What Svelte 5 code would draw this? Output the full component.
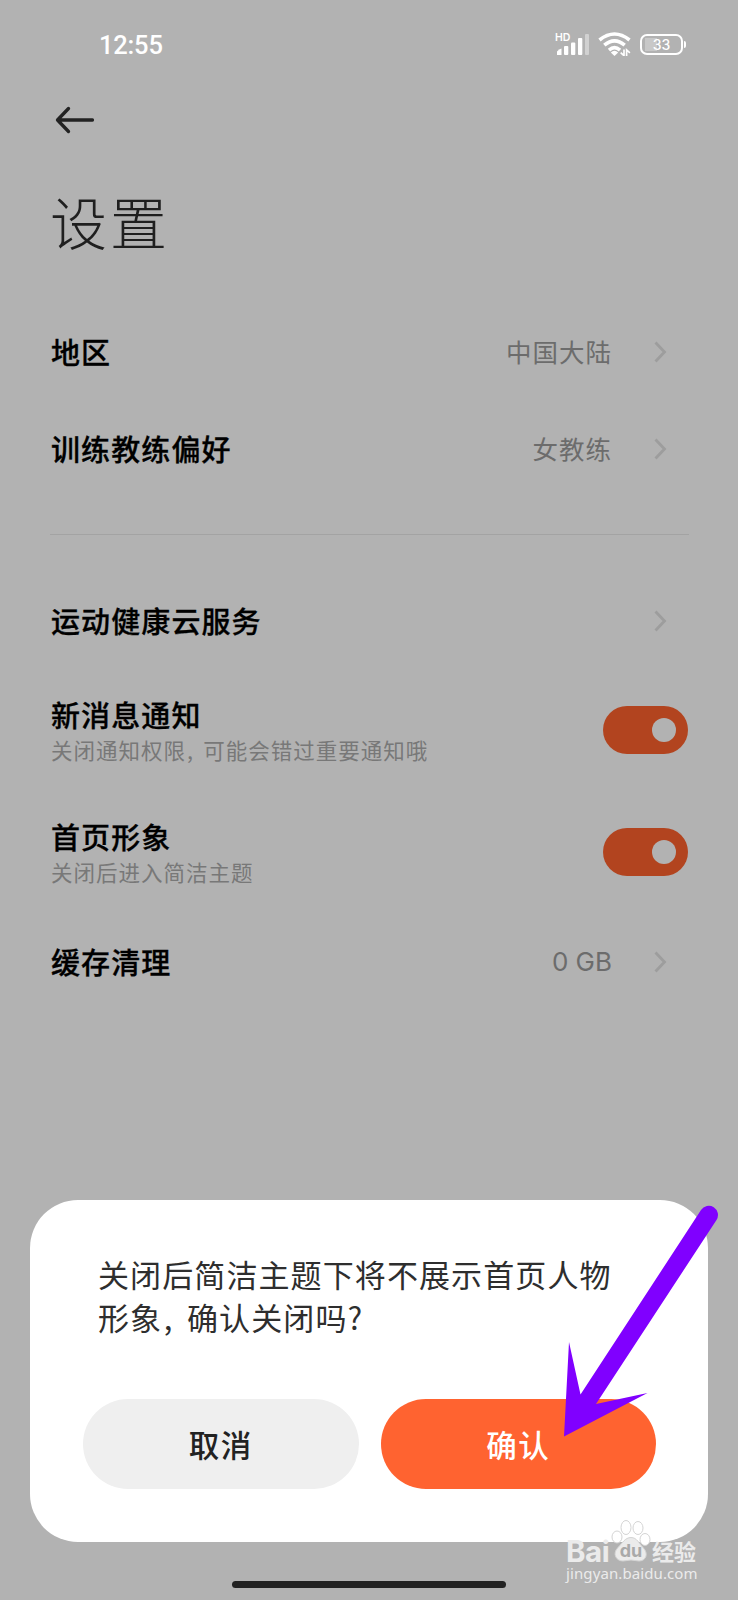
<script>
    let groups = [
        [
            { title: '地区', value: '中国大陆' },
            { title: '训练教练偏好', value: '女教练' }
        ],
        [
            { title: '运动健康云服务' },
            { title: '新消息通知', desc: ['关闭通知权限', '可能会错过重要通知哦'], toggle: true },
            { title: '首页形象', desc: ['关闭后进入简洁主题'], toggle: true },
            { title: '缓存清理', value: '0 GB', latin: true }
        ]
    ];
</script>

<div class="phone">
    <header class="status">
        <span class="time">12:55</span>
        <div class="status-icons">
            <svg class="signal" width="34" height="24" viewBox="0 0 34 24">
                <text x="0" y="9.300" font-size="10.5" font-weight="600" fill="#fff">HD</text>
                <g fill="#fff">
                    <path d="M2 23v-3.500q2-2.500 4.500-3v6.500z" />
                    <rect x="9" y="14" width="4.300" height="9" rx="1" />
                    <rect x="16" y="10.500" width="4.300" height="12.500" rx="1" />
                    <rect x="23" y="6" width="4.300" height="17" rx="1" />
                    <rect x="30" y="2" width="4" height="21" rx="1" opacity=".4" />
                </g>
            </svg>
            <svg class="wifi" width="33" height="24" viewBox="0 0 33 24">
                <g fill="none" stroke="#fff" stroke-width="3.600">
                    <path d="M1.500 8Q16.500-4 31.500 8" />
                    <path d="M6.300 13.200Q16.500 4.500 26.700 13.200" />
                    <path d="M11 18.100Q16.500 13.300 22 18.100" />
                </g>
                <path d="M12.800 20.500q3.700-3.500 7.400 0l-3.700 3.500z" fill="#fff" />
                <path d="M26 17.500v6.200l-3.300-3M28.600 24v-6.200l3.300 3" fill="none" stroke="#fff" stroke-width="1.700" />
            </svg>
            <div class="battery"><span>33</span></div>
        </div>
    </header>

    <nav>
        <svg width="40" height="30" viewBox="0 0 40 30" fill="none" stroke="#222" stroke-width="3.300" stroke-linecap="round" stroke-linejoin="round">
            <path d="M37.500 15H2.500M13.500 3.500L2.500 15l11 11.500" />
        </svg>
    </nav>

    <h1>设置</h1>

    <main>
        {#each groups as group}
            <section>
                {#each group as item}
                    <div class="row" class:tall={item.toggle}>
                        <div class="label">
                            <h2>{item.title}</h2>
                            {#if item.desc}
                                <p>{#each item.desc as part, i}{#if i > 0}<span class="comma">,</span>{/if}{part}{/each}</p>
                            {/if}
                        </div>
                        {#if item.toggle}
                            <div class="toggle"><i></i></div>
                        {:else}
                            {#if item.value}
                                <span class="value" class:latin={item.latin}>{item.value}</span>
                            {/if}
                            <svg class="chevron" width="14" height="22" viewBox="0 0 14 22" fill="none" stroke="#9d9d9d" stroke-width="2.800">
                                <path d="M2.500 1.500L11.500 11l-9 9.500" />
                            </svg>
                        {/if}
                    </div>
                {/each}
            </section>
        {/each}
    </main>

    <div class="dialog">
        <p>关闭后简洁主题下将不展示首页人物<br />形象<span class="comma">,</span>确认关闭吗?</p>
        <div class="actions">
            <button class="cancel">取消</button>
            <button class="confirm">确认</button>
        </div>
    </div>

    <div class="home-bar"></div>

    <!-- pointer towards the confirm button -->
    <svg class="pointer" width="160" height="240" viewBox="0 0 160 240">
        <path d="M4 236.500L9 142l11.500 52.500L141 10A8.900 8.900 0 0 1 156.500 20L36 204l51.500-11z" fill="#8000ff" />
    </svg>

    <div class="watermark">
        <div class="brand">
            <span class="bai">Bai</span>
            <svg width="40" height="44" viewBox="0 0 40 44">
                <g fill="#fff" stroke="#d4d4d4" stroke-width="1">
                    <ellipse cx="6" cy="18" rx="5" ry="6" />
                    <ellipse cx="15" cy="8.500" rx="5" ry="7" />
                    <ellipse cx="27" cy="9" rx="5" ry="6.500" />
                    <ellipse cx="34" cy="20.500" rx="5" ry="6" />
                    <path d="M20 18.500c6 0 8 6 12 10 6 6 3 13.500-4 13.500-3 0-5-1-8-1s-5 1-8 1c-7 0-11-7.500-5-13.500 4-4 7-10 13-10z" fill="#ebebeb" />
                </g>
                <text x="20" y="38" text-anchor="middle" font-size="18" font-weight="700" fill="#a9a9a9">du</text>
            </svg>
            <span class="jy">经验</span>
        </div>
        <div class="url">jingyan.baidu.com</div>
    </div>
</div>

<style>
    :global(body) {
        margin: 0;
    }

    .phone {
        position: relative;
        width: 738px;
        height: 1600px;
        overflow: hidden;
        background: #b2b2b2;
        font-family: "Noto Sans CJK SC", sans-serif;
    }

    .status {
        display: flex;
        justify-content: space-between;
        align-items: center;
        height: 88px;
        padding: 0 51px 0 99px;
        box-sizing: border-box;
        color: #fff;
    }

    .time {
        padding-top: 1px;
        font: 500 25.5px/30px Roboto, sans-serif;
        letter-spacing: -0.2px;
    }

    .status-icons {
        display: flex;
        align-items: center;
        gap: 9px;
    }

    .signal text {
        font-family: Inter, sans-serif;
    }

    .battery {
        position: relative;
        width: 43px;
        height: 21px;
        margin-right: 4px;
        box-sizing: border-box;
        border: 2px solid #fff;
        border-radius: 7px;
        background: linear-gradient(#c8c8c8, #c8c8c8) 3px 2px / 12px 13px no-repeat;
        font: 500 14px/17px Inter, sans-serif;
        text-align: center;
    }

    .battery::after {
        content: '';
        position: absolute;
        right: -5px;
        top: 5px;
        width: 2px;
        height: 7px;
        border-radius: 0 2px 2px 0;
        background: #fff;
    }

    nav {
        display: flex;
        align-items: center;
        height: 64px;
        padding-left: 55px;
    }

    h1 {
        margin: 29px 0 0 50px;
        height: 83px;
        color: #1f1f1f;
        font-size: 57px;
        font-weight: 300;
        line-height: 78px;
        letter-spacing: 3px;
    }

    main {
        padding: 39px 49px 0 50px;
    }

    section + section {
        margin-top: 37px;
        padding-top: 37px;
        border-top: 1px solid #a3a3a3;
    }

    .row {
        display: flex;
        align-items: center;
        height: 97px;
        padding: 0 22px 0 1px;
    }

    .row.tall {
        height: 122px;
        padding-right: 1px;
    }

    .label {
        flex: 1;
        padding-bottom: 2px;
    }

    .tall .label {
        padding: 0;
    }

    h2 {
        margin: 0;
        color: #000;
        font-size: 29px;
        font-weight: 500;
        line-height: 40px;
        letter-spacing: 1.1px;
        -webkit-text-stroke: 0.3px #000;
    }

    .label p {
        margin: 0;
        color: #787878;
        font-size: 21.5px;
        line-height: 32px;
        letter-spacing: 1px;
    }

    .comma {
        display: inline-block;
        width: 0.8em;
        text-indent: 0.05em;
    }

    .value {
        padding-bottom: 2px;
        color: #6c6c6c;
        font-size: 25.5px;
        line-height: 40px;
        letter-spacing: 1px;
    }

    .value.latin {
        padding: 0;
        font-family: Inter, sans-serif;
        font-size: 26px;
        letter-spacing: 0;
    }

    .chevron {
        margin-left: 41px;
    }

    .toggle {
        display: flex;
        align-items: center;
        justify-content: flex-end;
        width: 85px;
        height: 48px;
        padding-right: 12px;
        box-sizing: border-box;
        border-radius: 24px;
        background: #b2441f;
    }

    .toggle i {
        width: 24px;
        height: 24px;
        border-radius: 50%;
        background: #b2b2b2;
    }

    .dialog {
        position: absolute;
        left: 30px;
        top: 1200px;
        width: 678px;
        height: 342px;
        padding: 53px 52px 0 53px;
        box-sizing: border-box;
        border-radius: 48px;
        background: #fff;
    }

    .dialog p {
        height: 146px;
        margin: 0 0 0 15px;
        color: #2e2e2e;
        font-size: 31px;
        line-height: 42.5px;
        letter-spacing: 1.1px;
        white-space: nowrap;
    }

    .dialog .comma {
        width: 0.8em;
    }

    .actions {
        display: flex;
        gap: 22px;
    }

    button {
        flex: 1;
        height: 90px;
        padding: 0;
        border: 0;
        border-radius: 45px;
        font: 500 30.5px/90px "Noto Sans CJK SC", sans-serif;
        letter-spacing: 1.5px;
    }

    .cancel {
        background: #efefef;
        color: #222;
    }

    .confirm {
        background: #ff6330;
        color: #fff;
    }

    .home-bar {
        position: absolute;
        left: 232px;
        top: 1581px;
        width: 274px;
        height: 7px;
        border-radius: 4px;
        background: #222;
    }

    .pointer {
        position: absolute;
        left: 560px;
        top: 1200px;
    }

    .watermark {
        position: absolute;
        left: 566px;
        top: 1519px;
        width: 134px;
        color: #ebebeb;
    }

    .brand {
        display: flex;
        align-items: flex-end;
        height: 44px;
    }

    .brand svg {
        margin-left: 1px;
    }

    .brand text {
        font-family: Inter, sans-serif;
    }

    .bai {
        width: 44px;
        font: 700 29.5px/24px Inter, sans-serif;
        letter-spacing: -0.5px;
    }

    .jy {
        margin-left: 1px;
        font-size: 22px;
        font-weight: 700;
        line-height: 26px;
        white-space: nowrap;
    }

    .url {
        font: 400 15px/20px "Noto Sans", sans-serif;
        letter-spacing: 0.1px;
    }
</style>
